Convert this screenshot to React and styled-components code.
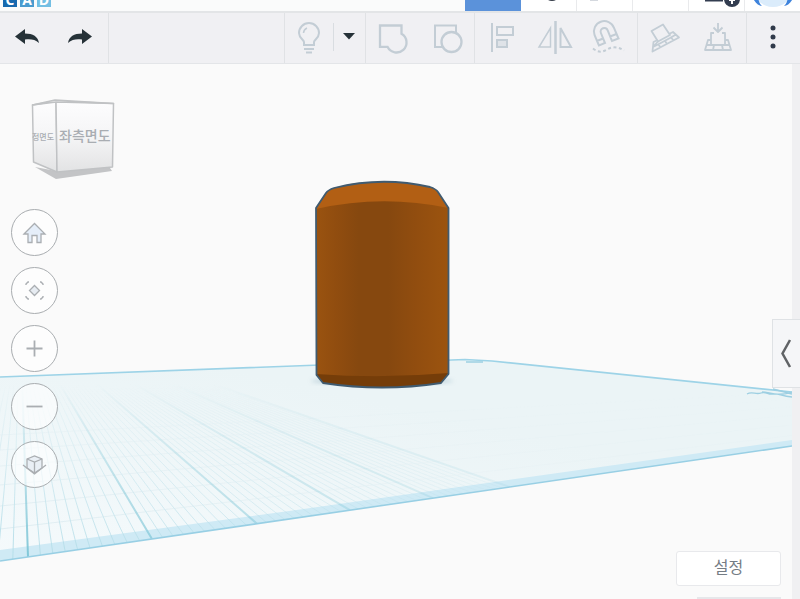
import React from "react";
import styled, { createGlobalStyle } from "styled-components";

const GlobalStyle = createGlobalStyle`
  * { box-sizing: border-box; }
  body {
    margin: 0;
    background: #fafafa;
    font-family: "Noto Sans CJK KR", "Noto Sans", sans-serif;
  }
  button { margin: 0; padding: 0; border: 0; background: none; font: inherit; color: inherit; cursor: pointer; }
  svg { display: block; }
`;

const Page = styled.div`
  display: flex;
  flex-direction: column;
  height: 100vh;
  overflow: hidden;
`;

const Header = styled.header`
  display: flex;
  height: 11px;
  flex: none;
  align-items: flex-end;
  overflow: hidden;
  background: #fafbfb;
`;

const Logo = styled.a`
  display: flex;
  gap: 3px;
  padding: 0 0 4px 3px;
  text-decoration: none;
`;

const LogoTile = styled.span`
  width: 14px;
  height: 14px;
  background: ${(p) => p.$color};
  color: #fff;
  font: 700 14px/14px "Open Sans", sans-serif;
  text-align: center;
`;

const Tabs = styled.nav`
  display: flex;
  margin-left: auto;
`;

const Tab = styled.button`
  width: 56px;
  height: 11px;
  overflow: hidden;
  background: ${(p) => (p.$active ? "#5b92da" : "#fff")};
  border-right: 1px solid ${(p) => (p.$active ? "#5b92da" : "#e9eaec")};
  &:last-child { width: 55px; border-right: 0; }
`;

const Toolbar = styled.div`
  display: flex;
  flex: none;
  height: 53px;
  background: #f0f0f3;
  border-top: 2px solid #e3e5e7;
  border-bottom: 1px solid #e3e5e8;
`;

const Group = styled.div`
  display: flex;
  flex: none;
  border-left: ${(p) => (p.$first ? "0" : "1px solid #e0e2e5")};
`;

const Spacer = styled.div`
  flex: 1;
  border-left: 1px solid #e0e2e5;
`;

const Tool = styled.button`
  width: ${(p) => p.$width || 54}px;
  height: 50px;
  color: ${(p) => (p.$dark ? "#263238" : "#c3cdd5")};
`;

const Divider = styled.span`
  width: 1px;
  height: 28px;
  margin-top: 10px;
  background: #d9dde1;
`;

const Workspace = styled.main`
  display: grid;
  flex: 1;
  min-height: 0;
  overflow: hidden;
  grid-template: minmax(0, 1fr) / minmax(0, 1fr);
  & > * { grid-area: 1 / 1; }
`;

const Viewport = styled.div`
  min-height: 0;
  border-right: 8px solid #f0f0f2;
`;

const Scene = styled.svg`
  width: 100%;
  height: 100%;
`;

const Navigation = styled.div`
  z-index: 1;
  justify-self: start;
  display: flex;
  flex-direction: column;
  gap: 11px;
  padding: 28px 0 0 11px;
`;

const ViewCube = styled.button`
  width: 108px;
  height: 106px;
`;

const RoundButton = styled.button`
  width: 47px;
  height: 47px;
  border: 1px solid #a9adb0;
  border-radius: 50%;
  background: rgba(255, 255, 255, 0.6);
  color: #aaaeb2;
`;

const Side = styled.div`
  z-index: 1;
  justify-self: end;
  display: flex;
  flex-direction: column;
  align-items: flex-end;
  padding-top: 255px;
`;

const PanelToggle = styled.button`
  width: 28px;
  height: 69px;
  flex: none;
  border: 1px solid #dfe2e5;
  border-right: 0;
  background: #f5f6f8;
  color: #606366;
`;

const Settings = styled.button`
  width: 105px;
  height: 35px;
  flex: none;
  margin: auto 19px 11px 0;
  border: 1px solid #e8e9ec;
  border-radius: 3px;
  background: #fff;
  color: #747c84;
  font-size: 16px;
  line-height: 28px;
  padding-bottom: 5px;
`;

const SnapEdge = styled.div`
  width: 84px;
  height: 2px;
  flex: none;
  margin-right: 19px;
  background: #e6e7ea;
`;

const stroke = { fill: "none", stroke: "currentColor", strokeWidth: 2 };

/* Icons fill their tool button; one unit is one pixel. */
function Glyph({ width = 54, children }) {
  return (
    <svg width={width} height="50" viewBox={`0 0 ${width} 50`} {...stroke} aria-hidden="true">
      {children}
    </svg>
  );
}

const icons = {
  undo: <path fill="currentColor" stroke="none" d="M15 23.500 25 16v4.500c8 0 13 3 14 9.500-4-4-9-4-14-3.500V31z" />,
  redo: <path fill="currentColor" stroke="none" d="M38 23.500 28 16v4.500c-8 0-13 3-14 9.500 4-4 9-4 14-3.500V31z" />,
  bulb: (
    <>
      <path d="M19 32v-3c0-2-5-4-5-9a10 10 0 0 1 20 0c0 5-5 7-5 9v3z" />
      <path d="M18.500 20a6 6 0 0 1 3.500-5" strokeWidth="1.500" />
      <path d="M19 36h10M21 39.500h6" />
    </>
  ),
  caret: <path fill="currentColor" stroke="none" d="M9 20h12L15 26.500z" />,
  group: <path strokeWidth="2.300" d="M14 12.500h21.500v8.300a10 10 0 1 1-14 13h-7.500z" />,
  ungroup: (
    <>
      <path d="M22 34h-7V12.500h21v8" />
      <circle cx="31.500" cy="29" r="10" strokeWidth="2.300" />
    </>
  ),
  align: (
    <>
      <path d="M17 10v29" />
      <rect x="22" y="14" width="16" height="8" />
      <rect x="22" y="27" width="10" height="7" fill="#dfe3e8" />
    </>
  ),
  mirror: (
    <>
      <path d="M26.500 8v33" strokeWidth="2.500" />
      <path d="M21.500 15v19H10z" strokeWidth="1.500" />
      <path d="M31.500 15v19H42z" />
    </>
  ),
  magnet: (
    <>
      <path d="M16 32.500 11.500 22a10.300 10.300 0 0 1 19.500-7L35.500 25.500 29 28 24.700 17.300a3.600 3.600 0 0 0-6.800 2.700L22 30zM14 28l6-2.500M27 23.500l6.500-2.500" />
      <path d="M10 35.500c5 4 9 4 14 1 5-3 11-3 17 1" strokeDasharray="3 2.500" />
    </>
  ),
  workplane: (
    <g strokeWidth="1.800" strokeLinejoin="round">
      <path d="M20 28.500 13.500 18 25 11.500 32 22z" />
      <path d="M31 21l4-2 6 5.500L14.500 38.500l1-9.500 4-2M15 34l5-5.500M15 34 20 31.500 32 25l6-3.500M20.500 31.500l2 3M27 28l2.500 3.500M33 24.500l3 3.500" />
    </g>
  ),
  drop: (
    <g strokeWidth="1.800" strokeLinejoin="round">
      <path d="M26 10v8.500M21.500 14.500l4.500 4.500 4.500-4.500" />
      <path d="M22 20h-3v12h14V20h-3M19 27h-3L13 37h26l-3-10h-3M14.500 32h23M22 32l-1 5M30 32l1 5" />
    </g>
  ),
  more: (
    <g fill="#303a4a" stroke="none">
      <circle cx="26" cy="15" r="2.500" />
      <circle cx="26" cy="24" r="2.500" />
      <circle cx="26" cy="33" r="2.500" />
    </g>
  ),
};

function ToolButton({ name, label, width, dark }) {
  return (
    <Tool aria-label={label} $width={width} $dark={dark}>
      <Glyph width={width}>{icons[name]}</Glyph>
    </Tool>
  );
}

const tabs = [
  { label: "3D 디자인", active: true },
  { label: "블록", art: <circle cx="31" cy="-7" r="8" fill="#333b47" /> },
  { label: "브릭", art: <path d="M13 0h8" stroke="#d4d8de" strokeWidth="2" /> },
  { label: "시뮬레이션" },
  {
    label: "초대",
    art: (
      <>
        <path d="M16 0h18v1.500H16z" fill="#333d50" />
        <circle cx="43" cy="-1" r="8" fill="#333d50" />
        <path d="M43-5v9M40 0h6" stroke="#fff" strokeWidth="2" />
      </>
    ),
  },
  {
    label: "프로필",
    art: (
      <>
        <circle cx="28" cy="-13" r="20" fill="#dbecfb" />
        <path d="M8-2c2 5 6 8 9 8C14 3 14 1 13-2zM48-2c-2 5-6 8-9 8 3-3 3-5 4-8z" fill="#3e83dc" />
      </>
    ),
  },
];

const bottomY = (x) => 561 - (x * 115) / 792;
const majors = [-124, 28, 152, 257, 350, 433, 510];
const minors = majors.slice(1).flatMap((end, i) => {
  const start = majors[i];
  return Array.from({ length: 9 }, (_, n) => start + ((end - start) * (n + 1)) / 10);
});
const crossings = [435, 450, 466, 485, 506, 529];

function rays(points) {
  return points.map((x) => `M20 317L${x} ${bottomY(x)}`).join("");
}

function Design() {
  return (
    <Scene viewBox="0 64 792 535" preserveAspectRatio="xMinYMin slice" role="img" aria-label="작업 평면">
      <defs>
        <linearGradient id="floor" x1="0.8" y1="0" x2="0" y2="1">
          <stop offset="0.3" stopColor="#ebf4f6" />
          <stop offset="1" stopColor="#f5fafc" />
        </linearGradient>
        <linearGradient id="fadeDown" x1="0" y1="375" x2="0" y2="560" gradientUnits="userSpaceOnUse">
          <stop offset="0.05" stopColor="#000" />
          <stop offset="1" stopColor="#fff" />
        </linearGradient>
        <linearGradient id="fadeRight" x1="0" x2="520" y1="0" y2="0" gradientUnits="userSpaceOnUse">
          <stop offset="0" stopColor="#fff" />
          <stop offset="1" stopColor="#333" />
        </linearGradient>
        <mask id="near" maskUnits="userSpaceOnUse" x="0" y="350" width="800" height="220">
          <rect y="350" width="800" height="220" fill="url(#fadeDown)" />
        </mask>
        <mask id="left" maskUnits="userSpaceOnUse" x="0" y="350" width="800" height="220">
          <rect y="350" width="800" height="220" fill="url(#fadeRight)" />
        </mask>
        <clipPath id="plane">
          <path d="M0 377 465 359.500 492 361 792 392V446L0 561z" />
        </clipPath>
        <linearGradient id="body">
          <stop offset="0" stopColor="#9a5310" />
          <stop offset="0.15" stopColor="#914d0f" />
          <stop offset="0.32" stopColor="#86480f" />
          <stop offset="0.55" stopColor="#86480f" />
          <stop offset="0.75" stopColor="#914d0f" />
          <stop offset="1" stopColor="#9c540f" />
        </linearGradient>
        <filter id="soft">
          <feGaussianBlur stdDeviation="2" />
        </filter>
      </defs>

      <g clipPath="url(#plane)">
        <path d="M0 350H792V570H0z" fill="url(#floor)" />
        <path d="M0 550 300 509.500 792 440V446L0 561z" fill="#cfeaf5" />
        <g mask="url(#left)" fill="none">
          <g mask="url(#near)">
            <path d={crossings.map((y) => `M0 ${y}L800 ${y - 18 - (y - 390) * 0.55}`).join("")} stroke="#d3e6ec" strokeWidth="0.8" />
            <path d={rays(minors)} stroke="#b4dde8" strokeWidth="1" />
          </g>
        </g>
        <g mask="url(#left)">
          <g mask="url(#near)">
            <path d={rays(majors)} stroke="#7cc5d6" strokeWidth="2" />
          </g>
        </g>
      </g>
      <path d="M0 377 465 359.500 492 361 792 392" fill="none" stroke="#9dd3e7" strokeWidth="1.600" />
      <path d="M0 561 792 446" fill="none" stroke="#98cfe4" strokeWidth="1.600" />
      <path d="M747 394c5-3 9 1 14-1s7 2 12 1 8 2 19 3M762 392c8 0 14 5 30 0M773 389l19 5M466 362h17" fill="none" stroke="#9dcfe2" strokeWidth="1.300" />

      <ellipse cx="382" cy="381" rx="71" ry="4" fill="#9db9c7" opacity="0.5" filter="url(#soft)" />
      <path d="M316 208 326 193Q328 190 334 188Q382 176 430 187Q436 189 438 192L448.500 208V374L441 383Q382 392 323 383L316 375z" fill="url(#body)" />
      <path d="M316 209 326 193Q328 190 334 188Q382 176 430 187Q436 189 438 192L448.500 208Q382 194 316 209z" fill="#b25f14" />
      <path d="M316 374Q382 379 448.500 373L441 383Q382 392 323 383z" fill="#753d09" />
      <path d="M316 208 326 193Q328 190 334 188Q382 176 430 187Q436 189 438 192L448.500 208V374L441 383Q382 392 323 383L316.500 375z" fill="none" stroke="#405b70" strokeWidth="1.800" strokeLinejoin="round" />
    </Scene>
  );
}

function CubeArt() {
  return (
    <svg width="108" height="106" viewBox="11 92 108 106" aria-hidden="true">
      <defs>
        <linearGradient id="face" x1="0" y1="0" x2="0" y2="1">
          <stop offset="0" stopColor="#fdfdfe" />
          <stop offset="0.5" stopColor="#f5f5f6" />
          <stop offset="1" stopColor="#e2e3e4" />
        </linearGradient>
      </defs>
      <path d="M35 167 56 179 112 171 108 165 56 171z" fill="#c3c4c6" />
      <g fill="url(#face)" stroke="#c0c2c4" strokeWidth="1.500" strokeLinejoin="round">
        <path d="M32.500 105 56 101 57 172 33.500 162z" />
        <path d="M56 101 113.500 103.500 112.500 167 57 172z" />
        <path d="M32.500 105 55 100 113.500 103.500 56 102z" />
      </g>
      <g fill="#a9adb2" fontFamily="Noto Sans CJK KR, sans-serif" fontWeight="500">
        <text x="59" y="141" fontSize="14">좌측면도</text>
        <text x="54" y="140" fontSize="8" textAnchor="end">정면도</text>
      </g>
    </svg>
  );
}

const navigation = [
  {
    label: "홈 뷰",
    art: <path d="M12 24 22.500 13.500 33 24h-4v8.500h-4v-7h-5v7h-4V24z" fill="#e5eef9" strokeWidth="1.300" />,
  },
  {
    label: "모든 뷰 맞춤",
    art: (
      <>
        <path d="m22.500 17.500 5 5-5 5-5-5z" fill="#e7ecf2" strokeWidth="1.300" />
        <path d="M14 17v-1l2-2h1M28 14h1l2 2v1M31 28v1l-2 2h-1M17 31h-1l-2-2v-1" strokeWidth="1.400" />
      </>
    ),
  },
  { label: "줌 확대", art: <path d="M22.500 14.500v16M14.500 22.500h16" strokeWidth="1.800" /> },
  { label: "줌 축소", art: <path d="M14.500 22.500h16" strokeWidth="1.800" /> },
  {
    label: "평면 뷰로 전환",
    art: (
      <>
        <path d="m15 17 7.500-3 7.500 3v9l-7.500 5-7.500-5z" fill="#e9eff5" strokeWidth="1.300" />
        <path d="m15 17 7.500 3 7.500-3M22.500 20v11M11 23l11.500 9L34 23" strokeWidth="1.300" />
      </>
    ),
  },
];

export default function App() {
  return (
    <Page>
      <GlobalStyle />
      <Header>
        <Logo href="#" aria-label="CAD">
          <LogoTile $color="#1769ae">C</LogoTile>
          <LogoTile $color="#4a9ccf">A</LogoTile>
          <LogoTile $color="#73bfe3">D</LogoTile>
        </Logo>
        <Tabs>
          {tabs.map((tab) => (
            <Tab key={tab.label} aria-label={tab.label} $active={tab.active}>
              <svg width="55" height="11" viewBox="0 0 55 11" aria-hidden="true">{tab.art}</svg>
            </Tab>
          ))}
        </Tabs>
      </Header>
      <Toolbar role="toolbar">
        <Group $first>
          <ToolButton name="undo" label="명령취소" dark />
          <ToolButton name="redo" label="명령복구" dark />
        </Group>
        <Spacer />
        <Group>
          <ToolButton name="bulb" label="모두 표시" width={48} />
          <Divider />
          <ToolButton name="caret" label="표시 옵션" width={31} dark />
        </Group>
        <Group>
          <ToolButton name="group" label="그룹화" />
          <ToolButton name="ungroup" label="그룹 해제" />
        </Group>
        <Group>
          <ToolButton name="align" label="정렬" />
          <ToolButton name="mirror" label="대칭" />
          <ToolButton name="magnet" label="크루즈" />
        </Group>
        <Group>
          <ToolButton name="workplane" label="작업 평면" />
          <ToolButton name="drop" label="작업 평면에 놓기" />
        </Group>
        <Group>
          <ToolButton name="more" label="더 보기" width={53} dark />
        </Group>
      </Toolbar>
      <Workspace>
        <Viewport>
          <Design />
        </Viewport>
        <Navigation>
          <ViewCube aria-label="좌측면도">
            <CubeArt />
          </ViewCube>
          {navigation.map((item) => (
            <RoundButton key={item.label} aria-label={item.label}>
              <svg width="45" height="45" viewBox="0 0 45 45" {...stroke} aria-hidden="true">{item.art}</svg>
            </RoundButton>
          ))}
        </Navigation>
        <Side>
          <PanelToggle aria-label="쉐이프 패널 열기">
            <svg width="27" height="67" viewBox="0 0 27 67" {...stroke} aria-hidden="true">
              <path d="M17 20 9.500 33.500 17 47" strokeWidth="2.500" />
            </svg>
          </PanelToggle>
          <Settings>설정</Settings>
          <SnapEdge />
        </Side>
      </Workspace>
    </Page>
  );
}
